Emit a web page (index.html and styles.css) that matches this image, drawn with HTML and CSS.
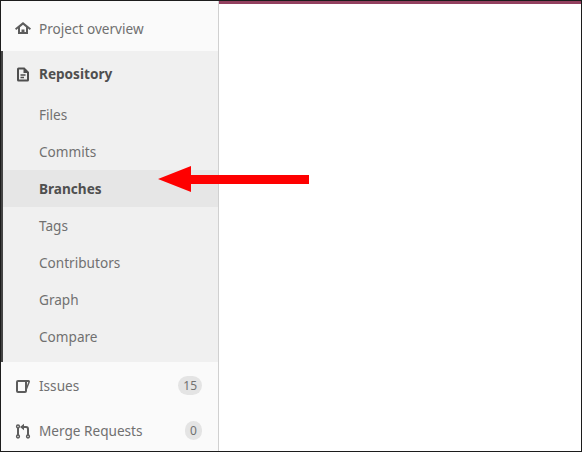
FILE: index.html
```html
<!DOCTYPE html>
<html lang="en">
<head>
    <meta charset="UTF-8">
    <title>Branches</title>
    <link rel="stylesheet" href="styles.css">
</head>
<body>
    <div class="frame">
        <nav class="sidebar">
            <a class="nav-top overview">
                <svg class="icon" viewBox="0 0 16 16"><path d="M8 2 0 8.500l1.200 1.400 1.800-1.500V14h10V8.400l1.800 1.500L16 8.500zM5 12V7.200l3-2.500 3 2.500V12H9.500V9.500h-3V12z" fill="#5c5c5c" fill-rule="evenodd"/></svg>
                <span>Project overview</span>
            </a>
            <div class="section">
                <a class="nav-top section-title">
                    <svg class="icon" viewBox="0 0 16 16"><path d="M3.500 1.500h6L14 6v8a1.500 1.500 0 0 1-1.500 1.500h-9A1.500 1.500 0 0 1 2 14V3a1.500 1.500 0 0 1 1.500-1.500zM4 3.500v10h8V7H8.500V3.500zM5.500 8.300h5v1.500h-5zM5.500 10.800h3.500v1.500H5.500z" fill="#4f4f4f" fill-rule="evenodd"/></svg>
                    <span>Repository</span>
                </a>
                <ul class="sub-list">
                    <li>Files</li>
                    <li>Commits</li>
                    <li class="active">Branches</li>
                    <li>Tags</li>
                    <li>Contributors</li>
                    <li>Graph</li>
                    <li>Compare</li>
                </ul>
            </div>
            <a class="nav-top issues">
                <svg class="icon" viewBox="0 0 16 16"><path d="M3 2h10.500c1.200 0 1.800 1 1.400 2L12 11.500V13a2 2 0 0 1-2 2H3a2 2 0 0 1-2-2V4a2 2 0 0 1 2-2zM3 4v9h7V4zM12 4v3.500L13.300 4z" fill="#5c5c5c" fill-rule="evenodd"/></svg>
                <span>Issues</span>
                <em class="badge">15</em>
            </a>
            <a class="nav-top merge">
                <svg class="icon" viewBox="0 0 16 16">
                    <g fill="none" stroke="#5c5c5c" stroke-width="1.500">
                        <circle cx="3" cy="3.500" r="1.400"/>
                        <circle cx="3" cy="13.500" r="1.400"/>
                        <circle cx="13" cy="13.500" r="1.400"/>
                        <path d="M3 5v7" stroke-width="2"/>
                        <path d="M13 12V6a2 2 0 0 0-2-2H8.500" stroke-width="2"/>
                    </g>
                    <path d="M9 .8 5 4l4 3.200z" fill="#5c5c5c"/>
                </svg>
                <span>Merge Requests</span>
                <em class="badge">0</em>
            </a>
        </nav>
        <main class="content"></main>
        <svg class="arrow" viewBox="0 0 155 30" width="155" height="30"><path d="M2 14 35 1v9h118v9H35v8z" fill="#fe0000"/></svg>
    </div>
</body>
</html>
```

FILE: styles.css
```css
html, body {
    margin: 0;
    padding: 0;
    background: #fff;
}
.frame {
    position: relative;
    display: flex;
    box-sizing: border-box;
    width: 582px;
    height: 452px;
    overflow: hidden;
    border: 1px solid #1c1c1c;
    font-family: "Noto Sans", sans-serif;
    font-size: 13.6px;
    color: #707070;
}
.sidebar {
    flex: 0 0 218px;
    box-sizing: border-box;
    height: 450px;
    background: #fafafa;
    border-right: 1px solid #d0d0d0;
}
.content {
    flex: 1;
    border-top: 3px solid #93405f;
    height: 447px;
}
.nav-top {
    display: flex;
    align-items: center;
    padding-left: 14px;
    padding-right: 16px;
}
.icon {
    width: 16px;
    height: 16px;
    margin-right: 8px;
    flex: none;
}
.overview {
    height: 50px;
    padding-top: 4px;
    box-sizing: border-box;
}
.section {
    height: 311px;
    box-sizing: border-box;
    background: #f0f0f0;
    border-left: 2px solid #444;
}
.section-title {
    height: 45px;
    padding-left: 12px;
    font-weight: bold;
    color: #4f4f4f;
}
.sub-list {
    list-style: none;
    margin: 0;
    padding: 0;
}
.sub-list li {
    height: 37px;
    line-height: 37px;
    padding-left: 36px;
}
.sub-list .active {
    background: #e6e6e6;
    font-weight: bold;
    color: #4f4f4f;
}
.issues {
    height: 47px;
}
.merge {
    height: 43px;
}
.badge {
    margin-left: auto;
    min-width: 7px;
    height: 19px;
    line-height: 19px;
    padding: 0 5px;
    border-radius: 10px;
    background: #e4e4e4;
    font-style: normal;
    font-size: 12px;
    text-align: center;
}
.arrow {
    position: absolute;
    left: 155px;
    top: 164px;
}
```
